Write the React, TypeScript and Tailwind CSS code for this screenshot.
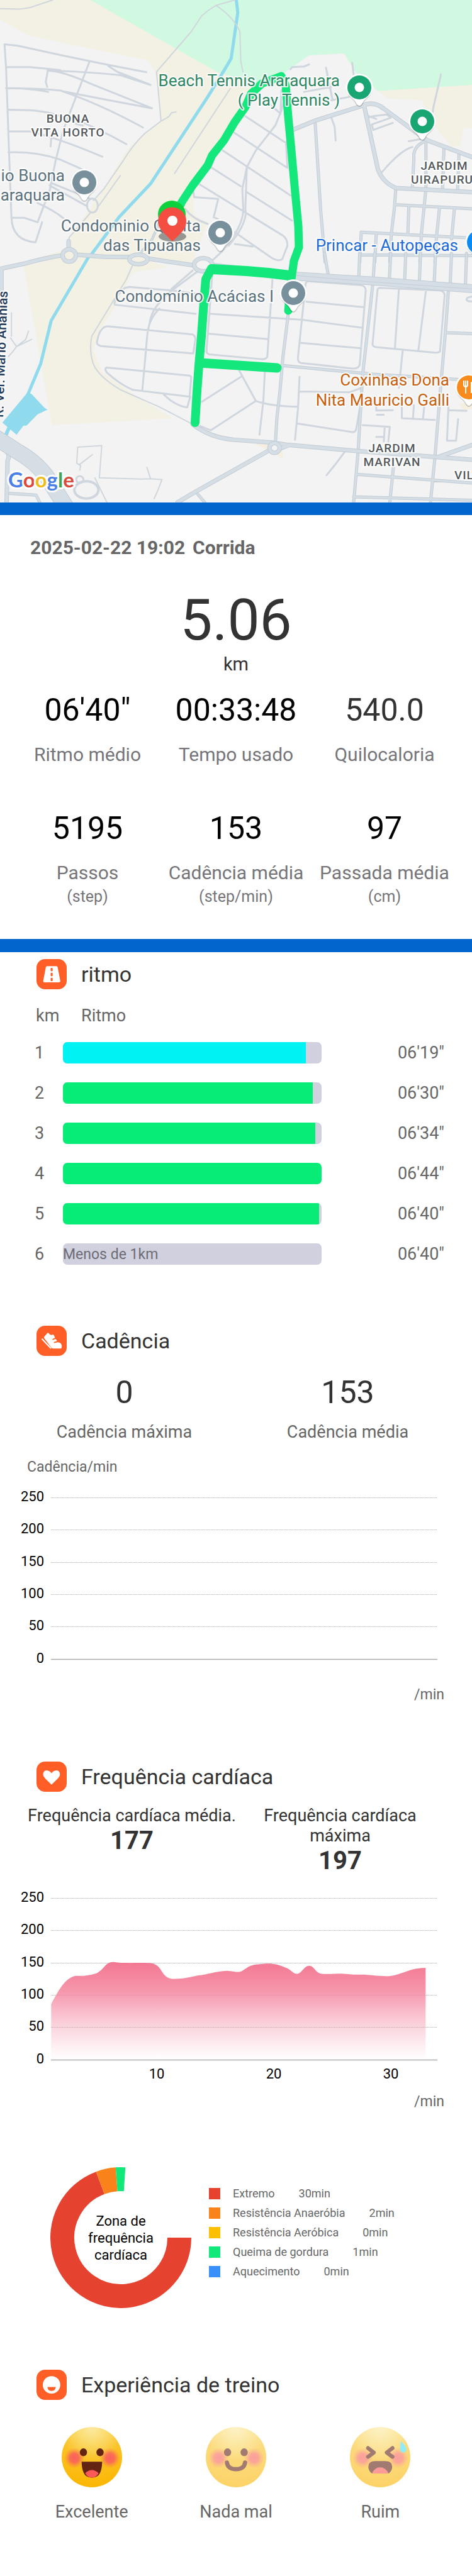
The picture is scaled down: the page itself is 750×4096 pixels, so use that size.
import React from "react";

const FONT = "font-['Roboto','Liberation_Sans',sans-serif]";

/* ---------- Map ---------- */

function Roads({ d, color, width }: { d: string; color: string; width: number }) {
  return (
    <path
      d={d}
      fill="none"
      stroke={color}
      strokeWidth={width}
      strokeLinecap="round"
      strokeLinejoin="round"
      vectorEffect="non-scaling-stroke"
    />
  );
}

function CasedRoads({ d, width }: { d: string; width: number }) {
  return (
    <>
      <Roads d={d} color="#c2ccd5" width={width} />
      <Roads d={d} color="#d5dee4" width={width - 2} />
    </>
  );
}

const northStreets =
  "M15,265 Q60,270 100,290 Q300,370 486,432 M15,265 L20,400 L30,910 L38,1300 Q40,1440 118,1450 L140,1330 " +
  "M20,402 L100,402 Q150,410 200,420 M158,422 Q300,430 400,450 L500,508 M20,528 Q90,525 160,550 M205,545 Q330,590 505,648 " +
  "M158,425 Q200,420 300,500 L505,648 M205,543 Q150,530 20,528 M205,545 Q330,620 475,763 M28,657 L100,660 Q170,670 205,700 " +
  "M215,690 Q320,760 420,863 M28,787 L100,787 Q200,830 340,938 M28,912 Q120,905 200,955 L275,1015 M298,365 L210,780 L185,960 " +
  "L165,1140 L125,1330 L80,1303 L40,1303 M158,430 L152,490 L157,520 M360,395 L390,430 L500,508 M168,876 L170,830 " +
  "M250,740 L275,752 M165,1110 L290,1235 M125,1215 Q180,1260 210,1305 M170,1095 L300,1190";

const northPaths =
  "M0,52 L65,55 L100,45 L175,0 M780,0 L718,32 Q780,110 797,190 L800,370 L807,430 M718,32 L690,65 L670,95 L635,190 L520,430 " +
  "L535,725 L480,800 Q440,870 410,960 L345,1130 L310,1200 M535,725 L560,700 L570,675 L585,670 M765,530 L580,1038 " +
  "M300,1275 L230,1420 L228,1470 M325,1240 L400,1050";

const middleStreets =
  "M815,695 L945,850 M775,790 L955,1005 M740,900 L965,1170 M700,1000 L800,1115 M820,1150 L970,1320 M660,1100 L940,1410 " +
  "Q955,1430 955,1470 L938,1550 Q925,1568 900,1540 L780,1390 M950,560 L935,660 L915,750 L850,900 L820,1000 L805,1130 " +
  "L808,1250 Q810,1350 740,1500 L700,1568 M820,1000 L815,1250 Q825,1330 760,1470 M640,1120 L645,1180 L725,1190 L710,1300 L760,1340 " +
  "M900,630 L932,680 L935,540 M950,850 L955,1005 M965,415 L970,402 L1010,398 L1027,385 M1083,405 L1105,600 " +
  "M1100,700 L1112,760 L1115,840 M1170,375 L1175,450 M1465,445 L1440,640 L1435,700 M1010,550 L1100,520 M1100,600 L1160,580 " +
  "M1370,880 Q1330,900 1270,1028 M1358,845 L1400,832 M1215,710 L1240,695 L1285,685 L1298,705 L1235,745 L1240,778 L1305,735 M1225,695 L1250,712 " +
  "M615,1250 Q640,1310 690,1340 M780,1460 L840,1475";

const eastRoads =
  "M1415,850 L1415,1130 L1400,1400 M1420,840 Q1370,870 1375,950 L1370,1120 M1475,880 L1470,1140 M1525,920 L1520,1145 " +
  "M1047,735 L1065,1250 L1080,1568 M1315,1130 L1310,1250 L1300,1400 M1315,1225 L1568,1250 M1358,1240 L1355,1400 " +
  "M1460,1245 L1450,1420 M1510,1245 L1500,1430 M1195,1568 L1200,1390 L1568,1425 M1250,1400 L1245,1568 M1200,1525 L1568,1530 " +
  "M1300,1400 L1295,1568 M1400,1400 L1395,1568 M1450,1420 L1445,1568";

const avenueNorth =
  "M975,775 L1050,720 L1200,635 Q1240,600 1275,650 L1380,790 L1420,840 L1568,940 M1210,635 L1255,1010 Q1270,1090 1315,1125 L1568,1150";

const southStreets =
  "M415,200 L430,195 L570,215 L655,235 M382,298 L650,350 M415,200 Q385,240 380,290 M660,100 L575,210 Q510,300 500,380 L490,460 L473,790 " +
  "M640,100 L570,205 M530,320 Q500,370 492,440 M355,422 L640,470 Q650,480 649,500 L642,580 L335,537 Q322,530 322,515 Q330,430 355,422 " +
  "M355,662 L630,708 Q636,712 635,725 L630,830 L440,790 Q400,760 355,690 Q345,665 355,662 M545,820 L565,850 Q600,890 622,892 L632,830 " +
  "M700,350 L1005,385 L1200,430 M690,465 L890,497 M905,155 L888,600 Q882,614 870,613 L695,585 Q686,580 686,565 L705,130 M795,680 L850,855 Q900,885 985,888 " +
  "M805,710 L670,860 M850,855 L700,1025 L665,1000 M880,680 L875,850 L862,1050 M995,715 L990,900 L980,1080 M995,800 L1160,805 L1200,780 " +
  "M985,985 L1170,1035 Q1180,1037 1183,1020 L1195,900 M1030,162 L1200,185 Q1215,190 1215,215 L1195,645 Q1190,670 1170,667 L1000,635 " +
  "Q988,630 990,600 L1015,180 Q1015,160 1030,162 M1018,280 L1210,312 M995,518 L1200,550 M1262,200 L1460,215 Q1478,220 1477,245 " +
  "L1462,565 Q1460,576 1445,575 L1250,543 Q1236,540 1238,520 L1254,212 Q1255,200 1262,200 M1325,210 L1312,550 M1415,215 L1390,560 " +
  "M1338,560 L1325,780 M1145,1150 L1115,1220 L1085,1285 M1205,995 L1295,1005 L1290,1090 M1250,870 L1250,910 L1305,908 M1252,935 L1275,935 " +
  "M1335,880 L1335,955 L1445,965 M1375,880 L1372,955 M1410,880 L1405,960 M1250,1063 L1275,1063 M1278,1005 L1275,1090 " +
  "M1490,880 L1485,1085 L1515,1085 L1522,960 M1490,908 L1550,912 M1568,250 Q1548,255 1550,270 Q1555,280 1568,278";

const southPaths =
  "M440,70 L420,150 L350,350 L305,480 Q295,560 310,640 Q325,710 400,790 L530,890 L640,990 " +
  "M265,1255 L268,1230 L255,1215 L258,1122 L338,1113 L330,1300 L470,1307 L500,1305 M265,1222 L307,1165 M488,1240 L500,1305 L538,1310 " +
  "L525,1370 L512,1420 M315,1300 L355,1442 M38,345 L38,480 M95,450 L85,500 L55,540 L42,570 L28,598 M55,540 L105,498 M55,540 L35,490";

const southRoads =
  "M915,1095 L920,950 L930,800 L940,600 L957,360 M940,650 L1240,700 L1568,735 M1240,155 L1205,700 L1190,1140 L1175,1442 " +
  "M1490,205 L1480,450 L1465,750 L1445,1180 L1430,1442 M1485,460 L1568,465 M1078,0 L1090,120 M1195,0 L1192,145 M1245,0 L1240,150 " +
  "M1298,0 L1293,170 M1348,0 L1344,170 M1397,0 L1393,180 M1447,0 L1442,190 M1500,0 L1495,200 M1550,0 L1546,195 " +
  "M1185,1280 L1568,1330 M1307,1240 L1295,1442 M1175,1410 L1568,1430 M30,1390 L120,1400 L132,1442 M650,1380 L680,1442";

const avenueSouth =
  "M640,990 Q700,1070 780,1080 L900,1095 L960,1110 L1190,1145 L1568,1195 M890,1145 L650,1380 L590,1442 M1455,1180 L1568,1110 " +
  "M960,1110 L925,1135 M0,1115 Q40,1160 25,1200 L22,1442 M0,90 L80,60 Q180,15 210,12 M255,8 L345,20 L430,22 M5,90 L5,230 M490,30 L645,70 M228,-20 L228,-70";

const pins = [
  { x: 571, y: 139, color: "#1aa672" },
  { x: 671, y: 193, color: "#1aa672" },
  { x: 134, y: 290, color: "#78909c" },
  { x: 350, y: 370, color: "#78909c" },
  { x: 466, y: 466, color: "#78909c" },
];

function Pin({ x, y, color, dot = true }: { x: number; y: number; color: string; dot?: boolean }) {
  return (
    <g transform={`translate(${x} ${y})`}>
      <path d="M0,31 Q-4,31 -7,24 C-10,18 -22,13 -22,0 A22,22 0 1 1 22,0 C22,13 10,18 7,24 Q4,31 0,31Z" fill="#000" opacity=".18" />
      <path d="M0,29 Q-3,29 -6,23 C-9,17 -22,13 -22,0 A22,22 0 1 1 22,0 C22,13 9,17 6,23 Q3,29 0,29Z" fill="#fff" />
      <circle r="19" fill={color} />
      {dot && <circle r="7.5" fill="#fff" />}
    </g>
  );
}

type Label = { x: number; y: number; text: string; anchor: "start" | "middle" | "end"; color: string };

const placeLabels: Label[] = [
  { x: 540, y: 137, text: "Beach Tennis Araraquara", anchor: "end", color: "#2e8763" },
  { x: 540, y: 168, text: "( Play Tennis )", anchor: "end", color: "#2e8763" },
  { x: 103, y: 288, text: "io Buona", anchor: "end", color: "#5b727e" },
  { x: 103, y: 319, text: "araquara", anchor: "end", color: "#5b727e" },
  { x: 319, y: 368, text: "Condominio Quinta", anchor: "end", color: "#5b727e" },
  { x: 319, y: 399, text: "das Tipuanas", anchor: "end", color: "#5b727e" },
  { x: 728, y: 399, text: "Princar - Autopeças", anchor: "end", color: "#1c6ad6" },
  { x: 435, y: 480, text: "Condomínio Acácias I", anchor: "end", color: "#5b727e" },
  { x: 714, y: 613, text: "Coxinhas Dona", anchor: "end", color: "#c7600e" },
  { x: 714, y: 645, text: "Nita Mauricio Galli", anchor: "end", color: "#c7600e" },
];

const districtLabels: Label[] = [
  { x: 108, y: 195, text: "BUONA", anchor: "middle", color: "#54585c" },
  { x: 108, y: 217, text: "VITA HORTO", anchor: "middle", color: "#54585c" },
  { x: 706, y: 270, text: "JARDIM", anchor: "middle", color: "#54585c" },
  { x: 653, y: 292, text: "UIRAPURU", anchor: "start", color: "#54585c" },
  { x: 623, y: 719, text: "JARDIM", anchor: "middle", color: "#54585c" },
  { x: 623, y: 741, text: "MARIVAN", anchor: "middle", color: "#54585c" },
  { x: 722, y: 762, text: "VIL", anchor: "start", color: "#54585c" },
];

function RouteMap() {
  return (
    <svg viewBox="0 0 750 799" className="block h-auto w-full" role="img" aria-label="Mapa do percurso">
      <rect width="750" height="799" fill="#f4f3f4" />

      {/* terrain, north half */}
      <g transform="scale(.4783 .2657)">
        <path d="M0,0 L300,0 L720,430 L860,450 L850,560 L640,1130 L645,1290 L690,1330 L640,1568 L80,1568 L225,1490 L240,1400 L320,1190 L370,1050 L420,900 L480,800 L535,725 L515,430 L490,360 L380,320 L100,215 L0,120Z" fill="#f3f0e4" />
        <path d="M300,0 L1568,0 L1568,510 L1255,545 L1180,430 L1143,320 L1025,332 L950,430 L850,500 L720,430Z" fill="#d1f8e1" />
        <path d="M1255,545 L1568,508 L1568,768 L1540,765 L1530,870 L1500,880 L1455,780 L1400,600 L1290,590Z" fill="#f3f0e4" />
        <path d="M785,0 L790,75 L768,350 L735,450 L690,580 L500,1100 L395,1300 L280,1580" fill="none" stroke="#90daed" strokeWidth="5" strokeLinejoin="round" vectorEffect="non-scaling-stroke" />
        <Roads d={northPaths} color="#d0d7dc" width={2} />
        <Roads d={northStreets} color="#cfd6dd" width={3} />
        <Roads d={middleStreets} color="#cfd6dd" width={3} />
        <ellipse cx="307" cy="1230" rx="18" ry="42" fill="none" stroke="#cfd6dd" strokeWidth="3" vectorEffect="non-scaling-stroke" />
        <CasedRoads d={eastRoads} width={5} />
        <CasedRoads d={avenueNorth} width={7} />
      </g>

      {/* terrain, south half */}
      <g transform="translate(0 402.8) scale(.4783 .2746)">
        <path d="M78,70 L172,995 L575,955 L455,830 L340,690 L310,560 L330,450 L390,290 L440,110 L560,80 L480,40 L300,10Z" fill="#f3f0e4" />
        <path d="M845,1100 L940,1190 L935,1100Z" fill="#f5efe0" />
        <path d="M1525,870 L1568,860 L1568,900 L1540,910Z" fill="#f5efe0" />
        <path d="M298,10 L170,390 L135,640 L92,820" fill="none" stroke="#90daed" strokeWidth="5" strokeLinejoin="round" vectorEffect="non-scaling-stroke" />
        <path d="M92,805 L105,815 L148,895 L158,905 L125,932 L88,998 L78,998 L55,1050 L8,980Z" fill="#90daed" />
        <path d="M30,1010 L10,1090" fill="none" stroke="#90daed" strokeWidth="6" vectorEffect="non-scaling-stroke" />
        <Roads d={southPaths} color="#d0d7dc" width={2} />
        <Roads d={southStreets} color="#cfd6dd" width={3} />
        <ellipse cx="287" cy="1370" rx="40" ry="50" fill="none" stroke="#cfd6dd" strokeWidth="4" vectorEffect="non-scaling-stroke" />
        <ellipse cx="265" cy="1310" rx="12" ry="20" fill="none" stroke="#cfd6dd" strokeWidth="3" vectorEffect="non-scaling-stroke" />
        <CasedRoads d={southRoads} width={5} />
        <CasedRoads d={avenueSouth} width={7} />
        <CasedRoads d="M455,20 L505,-80 L530,-180" width={4} />
        <CasedRoads d="M700,80 L960,130 L1240,160 L1568,205" width={14} />
        <Roads d="M980,128 L1240,166 L1568,206" color="#c5ced7" width={1} />
        <CasedRoads d="M-20,1060 L60,1150 Q130,1220 165,1320 L220,1470" width={26} />
        <g fill="#f3f0e4" stroke="#c2ccd5" strokeWidth="7">
          <ellipse cx="230" cy="12" rx="22" ry="36" vectorEffect="non-scaling-stroke" />
          <ellipse cx="460" cy="35" rx="30" ry="28" vectorEffect="non-scaling-stroke" />
          <ellipse cx="675" cy="66" rx="30" ry="38" fill="#f4f3f4" vectorEffect="non-scaling-stroke" />
          <ellipse cx="912" cy="1127" rx="17" ry="28" fill="#f4f3f4" vectorEffect="non-scaling-stroke" />
        </g>
        <g fill="none" stroke="#d5dee4" strokeWidth="5">
          <ellipse cx="230" cy="12" rx="22" ry="36" vectorEffect="non-scaling-stroke" />
          <ellipse cx="460" cy="35" rx="30" ry="28" vectorEffect="non-scaling-stroke" />
          <ellipse cx="675" cy="66" rx="30" ry="38" vectorEffect="non-scaling-stroke" />
          <ellipse cx="912" cy="1127" rx="17" ry="28" vectorEffect="non-scaling-stroke" />
        </g>
      </g>

      {/* recorded route */}
      <g fill="none" stroke="#14e87c" strokeLinecap="round" strokeLinejoin="round">
        <path strokeWidth="13" d="M282,335 L289,321 L306,295 L330,263 L337,247 L356,223 L373,194 L390,170 L399,149 L416,133 L447,121 L454,136 L458,186 L463,239 L469,306 L474,359 L475,393 L467,415 L463,444 L458,494" />
        <path strokeWidth="16" d="M460,438 L427,434 L392,431 L337,428" />
        <path strokeWidth="14" d="M336,427 L327,444 L324,480 L320,535 L316,581 L313,622 L310,672" />
        <path strokeWidth="15" d="M318,577 L440,585" />
      </g>

      <g className={`${FONT} text-[26px]`} stroke="#fff" strokeOpacity=".85" strokeWidth="4" strokeLinejoin="round" paintOrder="stroke">
        {placeLabels.map((l) => (
          <text key={l.text} x={l.x} y={l.y} textAnchor={l.anchor} fill={l.color}>
            {l.text}
          </text>
        ))}
        <text transform="translate(5 664) rotate(-88)" className="text-[21px] font-medium" fill="#243a5a">
          R. Ver. Mario Ananias
        </text>
      </g>
      <g className={`${FONT} text-[19px] font-medium tracking-wider`} stroke="#fff" strokeWidth="4" strokeLinejoin="round" paintOrder="stroke">
        {districtLabels.map((l) => (
          <text key={l.text + l.y} x={l.x} y={l.y} textAnchor={l.anchor} fill={l.color}>
            {l.text}
          </text>
        ))}
      </g>

      {pins.map((p) => (
        <Pin key={`${p.x}-${p.y}`} {...p} />
      ))}
      <Pin x={761} y={385} color="#0b8cf5" dot={false} />
      <Pin x={745} y={616} color="#f98b1c" dot={false} />
      <path d="M737,606 v6 q0,3 3,3 v10 M740,606 v8 M743,606 v6 q0,3 -3,3" fill="none" stroke="#fff" strokeWidth="2" strokeLinecap="round" />
      <path d="M748,625 V608 q4,-3 4,0 v17z" fill="#fff" />

      {/* start and finish markers */}
      <ellipse cx="274" cy="376" rx="22" ry="8" fill="#777" opacity=".75" />
      <path d="M251,341 a22,22 0 0 1 44,0 q0,8 -6,14 h-32 q-6,-6 -6,-14Z" fill="#0ed23c" />
      <path d="M274,384 L258,368 Q251,360 251,352 A22.5,22.5 0 0 1 296,352 Q296,360 290,368Z" fill="#f44d42" />
      <circle cx="274" cy="351" r="8" fill="#fff" />

      <text x="13" y="775" className="font-['Lato','Roboto',sans-serif] text-[33px] font-bold" stroke="#fff" strokeWidth="6" strokeLinejoin="round" paintOrder="stroke">
        <tspan fill="#4a80e8">G</tspan>
        <tspan fill="#d94a3d">o</tspan>
        <tspan fill="#efbd1b">o</tspan>
        <tspan fill="#4a80e8">g</tspan>
        <tspan fill="#3fa356">l</tspan>
        <tspan fill="#d94a3d">e</tspan>
      </text>
    </svg>
  );
}

/* ---------- Section heading ---------- */

function SectionTitle({ title, children }: { title: string; children: React.ReactNode }) {
  return (
    <div className="flex items-center gap-[23px] pl-[58px]">
      <svg viewBox="0 0 207 207" className="size-12 shrink-0" aria-hidden="true">
        <rect width="207" height="207" rx="58" fill="#ff5f26" />
        {children}
      </svg>
      <h2 className="text-[34px] leading-10 text-[#333]">{title}</h2>
    </div>
  );
}

/* ---------- Summary ---------- */

type Stat = { value: string; label: string; unit?: string; color?: string };

const totals: Stat[] = [
  { value: "06'40\"", label: "Ritmo médio" },
  { value: "00:33:48", label: "Tempo usado" },
  { value: "540.0", label: "Quilocaloria", color: "text-[#333]" },
];

const stepTotals: Stat[] = [
  { value: "5195", label: "Passos", unit: "(step)" },
  { value: "153", label: "Cadência média", unit: "(step/min)" },
  { value: "97", label: "Passada média", unit: "(cm)" },
];

function StatRow({ stats, className }: { stats: Stat[]; className: string }) {
  return (
    <dl className={`grid grid-cols-3 px-[21px] text-center ${className}`}>
      {stats.map((s) => (
        <div key={s.label} className="flex flex-col">
          <dd className={`text-[50px] leading-[60px] ${s.color ?? "text-black"}`}>{s.value}</dd>
          <dt className="mt-[23px] text-[30px] leading-9 whitespace-nowrap text-[#75757a]">
            {s.label}
            {s.unit && <span className="mt-1 block text-[25px] leading-8">{s.unit}</span>}
          </dt>
        </div>
      ))}
    </dl>
  );
}

/* ---------- Pace ---------- */

const laps = [
  { km: 1, time: "06'19\"", fill: 93.8, color: "bg-[#00f3f2]" },
  { km: 2, time: "06'30\"", fill: 96.6, color: "bg-[#06ec76]" },
  { km: 3, time: "06'34\"", fill: 97.6, color: "bg-[#06ec76]" },
  { km: 4, time: "06'44\"", fill: 100, color: "bg-[#06ec76]" },
  { km: 5, time: "06'40\"", fill: 99.1, color: "bg-[#06ec76]" },
  { km: 6, time: "06'40\"", fill: 0, color: "", note: "Menos de 1km" },
];

function PaceTable() {
  return (
    <table className="mt-6 w-full table-fixed text-left text-[27px] leading-9 text-[#666]">
      <thead>
        <tr>
          <th className="w-[100px] p-0 pl-[57px] font-normal">km</th>
          <th className="w-[411px] p-0 pl-[29px] font-normal">Ritmo</th>
          <th className="p-0" aria-label="Tempo" />
        </tr>
      </thead>
      <tbody className="before:block before:h-[9px]">
        {laps.map((lap) => (
          <tr key={lap.km} className="h-16">
            <td className="p-0 pl-[55px]">{lap.km}</td>
            <td className="p-0">
              <div className="h-[34px] overflow-hidden rounded-[7px] bg-[#d0d0df]">
                {lap.note ? (
                  <span className="block text-[23px] leading-9 text-[#6c6c75]">{lap.note}</span>
                ) : (
                  <div className={`h-full ${lap.color}`} style={{ width: `${lap.fill}%` }} />
                )}
              </div>
            </td>
            <td className="p-0 pr-11 text-right">{lap.time}</td>
          </tr>
        ))}
      </tbody>
    </table>
  );
}

/* ---------- Charts ---------- */

const ticks = [250, 200, 150, 100, 50, 0];

function Axes({ top, step }: { top: number; step: number }) {
  return (
    <g>
      {ticks.map((t, i) => (
        <g key={t}>
          <line
            x1="81"
            x2="695"
            y1={Math.round(top + i * step) + 0.5}
            y2={Math.round(top + i * step) + 0.5}
            stroke={t === 0 ? "#aaa" : "#a8a8a8"}
            strokeWidth={t === 0 ? 1.4 : 1}
            strokeDasharray={t === 0 ? undefined : "1 1"}
          />
          <text x="70" y={Math.round(top + i * step) + 6} textAnchor="end" className="text-[22px] font-normal">
            {t}
          </text>
        </g>
      ))}
    </g>
  );
}

function CadenceChart() {
  return (
    <svg viewBox="0 0 750 320" className="block h-auto w-full" role="img" aria-label="Cadência por minuto">
      <Axes top={34} step={51.3} />
    </svg>
  );
}

function HeartChart() {
  return (
    <svg viewBox="0 0 750 335" className="block h-auto w-full" role="img" aria-label="Frequência cardíaca por minuto">
      <defs>
        <linearGradient id="heart" x1="0" y1="0" x2="0" y2="1">
          <stop offset="0" stopColor="#f2708c" stopOpacity=".95" />
          <stop offset=".3" stopColor="#f4809a" stopOpacity=".82" />
          <stop offset=".65" stopColor="#f490a8" stopOpacity=".4" />
          <stop offset="1" stopColor="#f7a0b4" stopOpacity="0" />
        </linearGradient>
      </defs>
      <Axes top={37} step={51.35} />
      <g transform="translate(0 -217.1) scale(.4783 .39859)">
        <path
          fill="url(#heart)"
          d="M170,1282 V1060 C195,1005 215,958 250,948 C275,948 285,950 320,938 C345,925 350,893 375,893 C390,893 390,897 410,896 C440,897 470,895 500,897 C545,903 530,960 580,960 C620,960 640,948 670,945 C700,938 730,928 755,928 C775,929 780,934 795,932 C815,927 820,905 855,902 C880,900 895,898 905,900 C920,901 940,910 955,918 C970,928 975,941 988,940 C1005,935 1010,908 1027,908 C1045,908 1045,936 1070,940 C1090,942 1105,939 1135,939 C1160,940 1170,944 1200,943 C1230,943 1255,950 1290,949 C1315,947 1325,940 1340,935 C1365,924 1375,918 1414,916 V1282Z"
        />
      </g>
      <g textAnchor="middle" className="text-[22px] font-normal">
        <text x="249" y="324">10</text>
        <text x="435" y="324">20</text>
        <text x="621" y="324">30</text>
      </g>
    </svg>
  );
}

/* ---------- Heart zones ---------- */

const zones = [
  { name: "Extremo", time: "30min", color: "bg-[#e54230]" },
  { name: "Resistência Anaeróbia", time: "2min", color: "bg-[#f9821b]" },
  { name: "Resistência Aeróbica", time: "0min", color: "bg-[#fdc000]" },
  { name: "Queima de gordura", time: "1min", color: "bg-[#10e97a]" },
  { name: "Aquecimento", time: "0min", color: "bg-[#3a90fb]" },
];

const arcs = [
  { from: 0, to: 249.4, color: "#e54230" },
  { from: 249.4, to: 265.8, color: "#f9821b" },
  { from: 265.8, to: 273.7, color: "#10e97a" },
];

function arcPath(from: number, to: number) {
  const at = (deg: number) => {
    const a = (deg * Math.PI) / 180;
    return `${(112 + 93 * Math.cos(a)).toFixed(2)},${(112 + 93 * Math.sin(a)).toFixed(2)}`;
  };
  return `M${at(from)} A93,93 0 ${to - from > 180 ? 1 : 0} 1 ${at(to)}`;
}

function HeartZones() {
  return (
    <div className="mt-[90px] flex gap-7 pl-20">
      <div className="grid size-56 shrink-0 place-items-center">
        <svg viewBox="0 0 224 224" className="col-start-1 row-start-1 size-56" aria-hidden="true">
          {arcs.map((a) => (
            <path key={a.color} d={arcPath(a.from, a.to)} fill="none" stroke={a.color} strokeWidth="38" />
          ))}
        </svg>
        <p className="col-start-1 row-start-1 w-28 text-center text-[22px] leading-[27px] text-black">Zona de frequência cardíaca</p>
      </div>
      <ul className="mt-[26px] text-lg leading-[31px] text-[#666]">
        {zones.map((z) => (
          <li key={z.name} className="flex items-center">
            <span className={`size-[18px] ${z.color}`} />
            <span className="ml-5">{z.name}</span>
            <span className="ml-[38px]">{z.time}</span>
          </li>
        ))}
      </ul>
    </div>
  );
}

/* ---------- Training experience ---------- */

function Face({ id, children }: { id: string; children: React.ReactNode }) {
  return (
    <svg viewBox="0 0 200 200" className="size-24" aria-hidden="true">
      <defs>
        <radialGradient id={`${id}-skin`} cx=".5" cy="0" r="1">
          <stop offset="0" stopColor="#fdeaa4" />
          <stop offset=".25" stopColor="#fbdc70" />
          <stop offset=".55" stopColor="#fac224" />
          <stop offset="1" stopColor="#fcb602" />
        </radialGradient>
        <radialGradient id={`${id}-cheek`}>
          <stop offset="0" stopColor="#f9605c" />
          <stop offset=".45" stopColor="#f9605c" stopOpacity=".85" />
          <stop offset="1" stopColor="#fa8040" stopOpacity="0" />
        </radialGradient>
      </defs>
      <circle cx="100" cy="100" r="100" fill={`url(#${id}-skin)`} />
      <circle cx="42" cy="103" r="34" fill={`url(#${id}-cheek)`} />
      <circle cx="160" cy="103" r="34" fill={`url(#${id}-cheek)`} />
      {children}
    </svg>
  );
}

function OpenEyes() {
  return (
    <g fill="#642414">
      <ellipse cx="72" cy="84" rx="12" ry="13" />
      <ellipse cx="127" cy="84" rx="12" ry="13" />
    </g>
  );
}

function Experience({ label, selected, children }: { label: string; selected?: boolean; children: React.ReactNode }) {
  return (
    <button type="button" aria-pressed={!!selected} className="flex flex-col items-center gap-[21px] text-[27px] leading-9 text-[#666]">
      <span className={selected ? "block" : "block opacity-60"}>{children}</span>
      {label}
    </button>
  );
}

export default function App() {
  return (
    <main className={`w-full overflow-hidden bg-white text-black ${FONT}`}>
      <RouteMap />
      <div className="h-5 bg-[#0265cd]" />

      <section>
        <h1 className="flex gap-3 pt-[34px] pl-12 text-[30px] leading-9 font-bold text-[#666]">
          <span>2025-02-22 19:02</span>
          <span>Corrida</span>
        </h1>
        <p className="mt-[49px] text-center text-[91px] leading-[96px] text-[#333]">
          5.06
          <span className="mt-1 block text-[29px] leading-9">km</span>
        </p>
        <StatRow stats={totals} className="mt-[25px]" />
        <StatRow stats={stepTotals} className="mt-[69px]" />
      </section>

      <div className="mt-[51px] h-[21px] bg-[#0265cd]" />

      <section className="pt-[11px]">
        <SectionTitle title="ritmo">
          <path d="M73,49 H136 Q143,49 145,56 L163,150 Q164,160 154,160 H55 Q45,160 46,150 L64,56 Q66,49 73,49Z" fill="#fff" />
          <g fill="#ff5f26">
            <rect x="97" y="60" width="14" height="24" rx="6" />
            <rect x="97" y="94" width="14" height="24" rx="6" />
            <rect x="97" y="128" width="14" height="24" rx="6" />
          </g>
        </SectionTitle>
        <PaceTable />
      </section>

      <section className="mt-[82px]">
        <SectionTitle title="Cadência">
          <path d="M53,75 L76,49 Q81,46 84,52 Q93,65 103,64 L113,60 Q121,62 123,73 L127,83 L108,92 L111,98 L132,91 L141,105 L118,112 L120,119 L146,113 Q172,116 173,138 Q174,154 167,156 H113 Q106,156 101,149 L52,84 Q49,79 53,75Z" fill="#fff" />
          <path d="M39,92 L97,153" stroke="#fff" strokeWidth="9" strokeLinecap="round" />
        </SectionTitle>
        <dl className="mt-7 grid grid-cols-2 px-5 text-center">
          <div className="flex flex-col">
            <dd className="text-[50px] leading-[60px] text-[#333]">0</dd>
            <dt className="mt-[15px] text-[27px] leading-9 text-[#666]">Cadência máxima</dt>
          </div>
          <div className="flex flex-col">
            <dd className="text-[50px] leading-[60px] text-[#333]">153</dd>
            <dt className="mt-[15px] text-[27px] leading-9 text-[#666]">Cadência média</dt>
          </div>
        </dl>
        <p className="mt-6 pl-[43px] text-[23px] leading-7 text-[#666]">Cadência/min</p>
        <CadenceChart />
        <p className="mt-[14px] pr-11 text-right text-[23px] leading-7 text-[#666]">/min</p>
      </section>

      <section className="mt-[92px]">
        <SectionTitle title="Frequência cardíaca">
          <path d="M103,158 L60,116 Q38,92 48,74 Q58,56 80,62 Q96,66 103,80 Q110,66 126,62 Q148,56 158,74 Q168,92 146,116Z" fill="#fff" />
        </SectionTitle>
        <dl className="mt-[22px] grid grid-cols-2 px-11 text-center text-[#333]">
          <div>
            <dt className="text-[27px] leading-8 whitespace-nowrap">Frequência cardíaca média.</dt>
            <dd className="mt-0.5 text-[40px] leading-[44px] font-bold">177</dd>
          </div>
          <div>
            <dt className="text-[27px] leading-8">Frequência cardíaca máxima</dt>
            <dd className="mt-0.5 text-[40px] leading-[44px] font-bold">197</dd>
          </div>
        </dl>
        <HeartChart />
        <p className="mt-3 pr-11 text-right text-[23px] leading-7 text-[#666]">/min</p>
        <HeartZones />
      </section>

      <section className="mt-[98px] pb-[84px]">
        <SectionTitle title="Experiência de treino">
          <circle cx="103" cy="104" r="60" fill="#fff" />
          <path d="M75,119 H132 Q130,146 103,146 Q77,146 75,119Z" fill="#ff5f26" />
        </SectionTitle>
        <div className="mt-[43px] grid grid-cols-3 px-[31px]">
          <Experience label="Excelente" selected>
            <Face id="great">
              <OpenEyes />
              <path d="M66,115 H134 Q134,145 122,160 Q112,168 100,168 Q88,168 78,160 Q66,145 66,115Z" fill="#642414" />
              <path d="M78,153 Q100,132 122,153 Q114,168 100,168 Q86,168 78,153Z" fill="#fd5957" />
            </Face>
          </Experience>
          <Experience label="Nada mal">
            <Face id="fine">
              <OpenEyes />
              <path d="M70,118 Q73,140 100,140 Q127,140 130,118" fill="none" stroke="#642414" strokeWidth="14" strokeLinecap="round" />
            </Face>
          </Experience>
          <Experience label="Ruim">
            <Face id="bad">
              <g fill="none" stroke="#642414" strokeWidth="13" strokeLinecap="round" strokeLinejoin="round">
                <path d="M60,70 L79,85 L60,99" />
                <path d="M141,70 L122,85 L141,99" />
              </g>
              <path d="M84,113 H117 Q140,113 140,132 Q140,146 128,154 H73 Q61,146 61,132 Q61,113 84,113Z" fill="#642414" />
              <path d="M73,154 Q82,134 100,134 Q118,134 128,154Z" fill="#fd5957" />
              <path d="M169,47 Q188,66 187,76 Q184,86 175,85 Q165,83 166,68Z" fill="#4be0f5" />
            </Face>
          </Experience>
        </div>
      </section>
    </main>
  );
}
